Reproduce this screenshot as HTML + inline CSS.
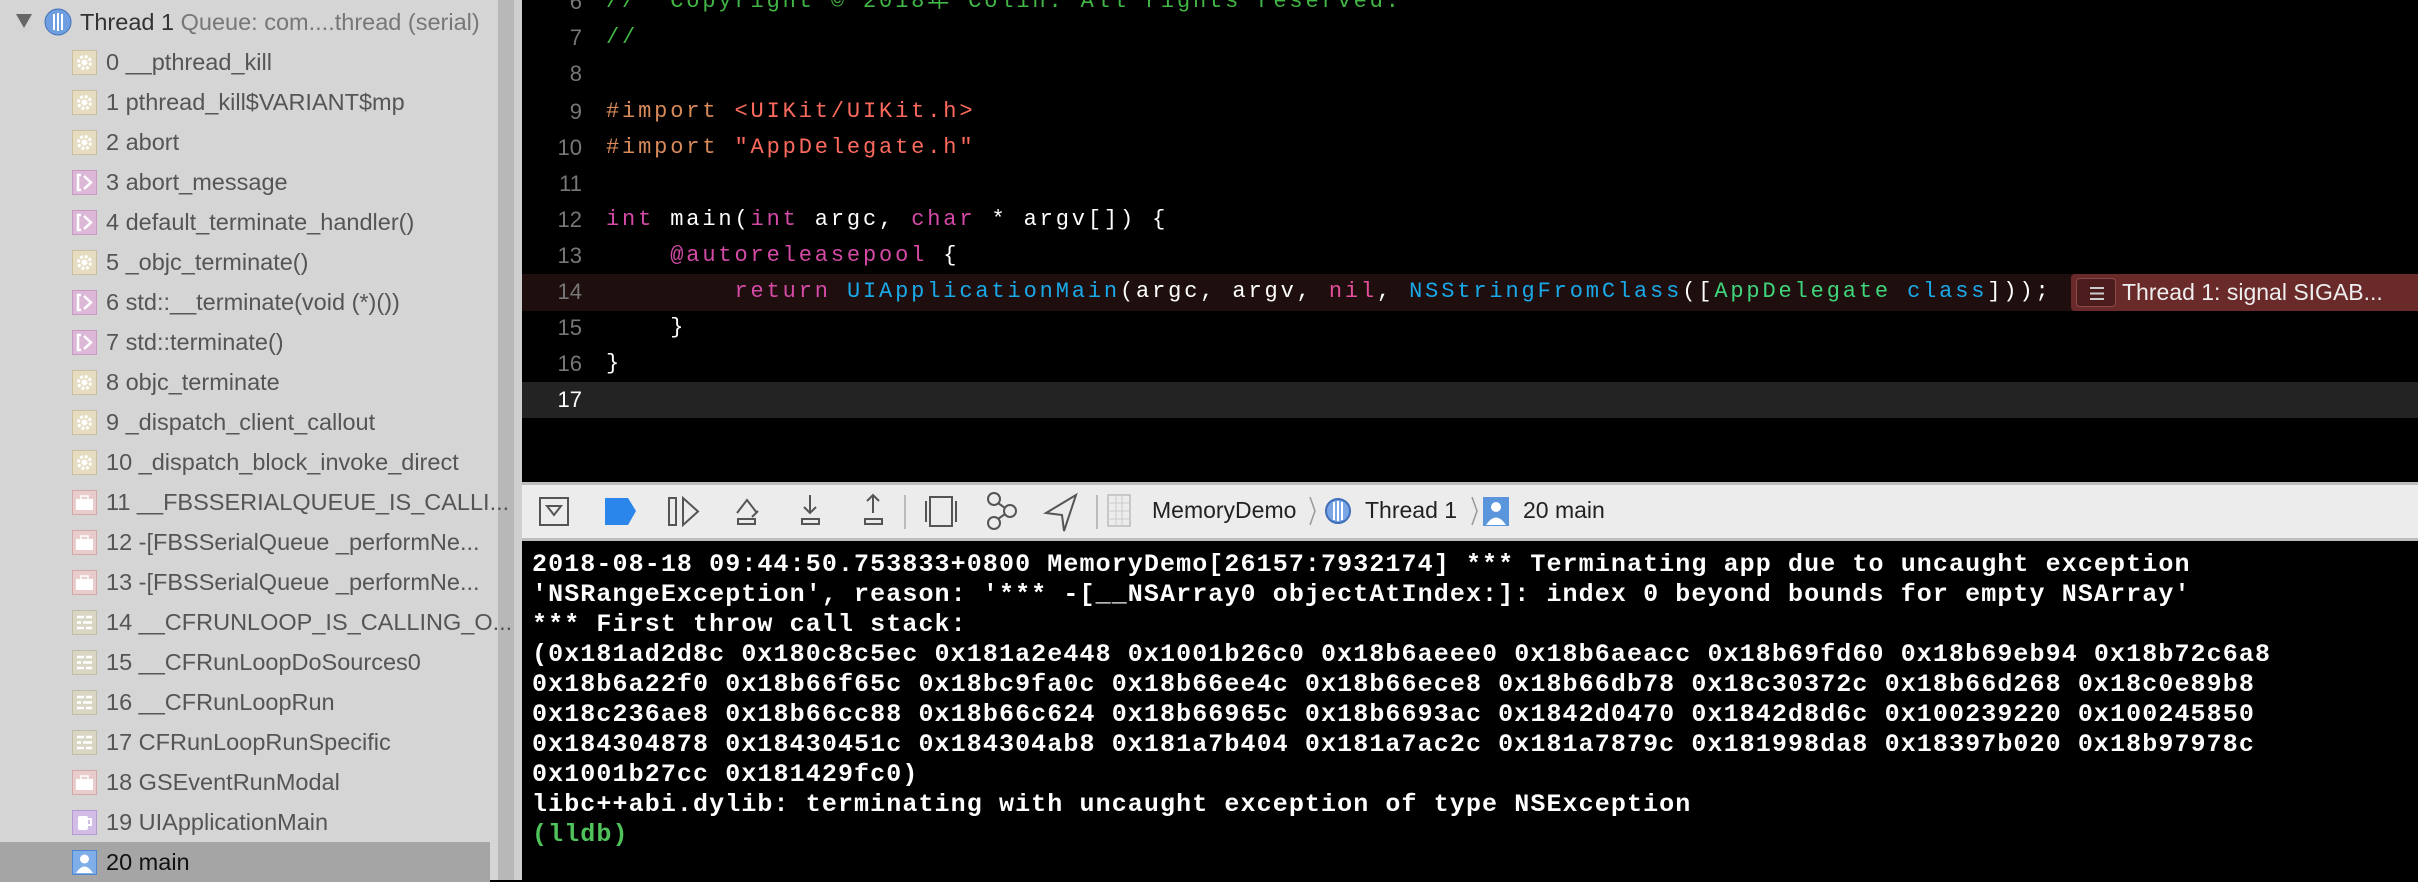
<!DOCTYPE html>
<html><head><meta charset="utf-8"><style>
*{margin:0;padding:0;box-sizing:border-box}
body{width:2418px;height:880px;overflow:hidden;background:#000;position:relative;font-family:"Liberation Sans",sans-serif}
#side{position:absolute;left:0;top:0;width:498px;height:880px;background:#d6d5d5}
#strip1{position:absolute;left:498px;top:0;width:16px;height:880px;background:#b9b8b8}
#strip2{position:absolute;left:514px;top:0;width:8px;height:880px;background:#cfcfcf}
.row{position:absolute;left:0;width:490px;height:40px;font-size:23.5px;color:#555;line-height:40px;white-space:nowrap}
.row .ic{position:absolute;left:72px;top:8px;width:25px;height:25px}
.row .t{position:absolute;left:106px;top:0}
.sel{background:#a6a5a5;color:#111}
.ln{position:absolute;left:522px;width:60px;text-align:right;color:#777;font-family:"Liberation Sans",sans-serif;font-size:22px;height:36px;line-height:36px}
.code{position:absolute;left:606px;font-family:"Liberation Mono",monospace;font-size:22px;letter-spacing:2.86px;color:#fff;height:36px;line-height:36px;white-space:pre}
.g{color:#41b645}.o{color:#d88a5a}.r{color:#fc6a5d}.p{color:#d44aa6}.b{color:#1aa9e8}.gr{color:#3fd67b}.pk{color:#e34f9a}
#tb{position:absolute;left:522px;top:482px;width:1896px;height:59px;background:#ececec;border-top:3px solid #bdbdbd;border-bottom:3px solid #bdbdbd}
.con{position:absolute;left:532px;font-family:"Liberation Mono",monospace;font-weight:bold;font-size:25px;letter-spacing:1.1px;color:#fff;white-space:pre;line-height:30px}
</style></head><body>
<div id="side">
<div class="row" style="top:2px">
<svg style="position:absolute;left:16px;top:12px" width="16" height="14"><path d="M0 0H16L8 14Z" fill="#666"/></svg>
<svg style="position:absolute;left:44px;top:6px" width="28" height="28"><circle cx="14" cy="14" r="13" fill="#6f9fe0" stroke="#3f6fb8"/><path d="M10 6V22M14 5V23M18 6V22" stroke="#fff" stroke-width="2"/></svg>
<span style="position:absolute;left:80px;color:#333">Thread 1 <span style="color:#777">Queue: com....thread (serial)</span></span></div>
</div>
<div id="strip1"></div><div id="strip2"></div>

<div id="rows"></div>

<div style="position:absolute;left:522px;top:274px;width:1896px;height:37px;background:#1e0e0e"></div>
<div style="position:absolute;left:522px;top:382px;width:1896px;height:36px;background:#232323"></div>
<div style="position:absolute;left:2071px;top:274px;width:347px;height:37px;background:#6a2a2a;border-radius:4px 0 0 4px"></div>
<div style="position:absolute;left:2076px;top:278px;width:40px;height:29px;background:#4c1c1c;border:1px solid #8a4a4a;border-radius:4px"><svg width="40" height="29"><path d="M13 9H27M13 14.5H27M13 20H27" stroke="#ccc" stroke-width="2"/></svg></div>
<div style="position:absolute;left:2122px;top:274px;height:37px;line-height:37px;color:#eee;font-size:23px">Thread 1: signal SIGAB...</div>

<div class="ln" style="top:-16px">6</div><div class="code g" style="top:-16px">//  Copyright © 2018年 Colin. All rights reserved.</div>
<div class="ln" style="top:20px">7</div><div class="code g" style="top:20px">//</div>
<div class="ln" style="top:56px">8</div>
<div class="ln" style="top:94px">9</div><div class="code" style="top:94px"><span class="o">#import</span> <span class="r">&lt;UIKit/UIKit.h&gt;</span></div>
<div class="ln" style="top:130px">10</div><div class="code" style="top:130px"><span class="o">#import</span> <span class="r">"AppDelegate.h"</span></div>
<div class="ln" style="top:166px">11</div>
<div class="ln" style="top:202px">12</div><div class="code" style="top:202px"><span class="p">int</span> main(<span class="p">int</span> argc, <span class="p">char</span> * argv[]) {</div>
<div class="ln" style="top:238px">13</div><div class="code" style="top:238px">    <span class="p">@autoreleasepool</span> {</div>
<div class="ln" style="top:274px">14</div><div class="code" style="top:274px">        <span class="p">return</span> <span class="b">UIApplicationMain</span>(argc, argv, <span class="pk">nil</span>, <span class="b">NSStringFromClass</span>([<span class="gr">AppDelegate</span> <span class="b">class</span>]));</div>
<div class="ln" style="top:310px">15</div><div class="code" style="top:310px">    }</div>
<div class="ln" style="top:346px">16</div><div class="code" style="top:346px">}</div>
<div class="ln" style="top:382px;color:#fff">17</div>

<div id="tb">
<svg width="1896" height="53" style="position:absolute;left:0;top:0" fill="none" stroke="#555" stroke-width="2">
<rect x="18" y="13" width="28" height="27"/><path d="M25 21H39L32 30Z"/>
<path d="M83 13H106L114 26L106 40H83Z" fill="#2a86ea" stroke="none"/>
<rect x="147" y="13" width="7" height="27"/><path d="M161 13L176 26.5L161 40Z"/>
<path d="M215 28L225 15L235 28M230 32L236 26" /><rect x="216" y="34" width="17" height="5"/>
<path d="M288 10V28M282 22L288 28L294 22"/><rect x="280" y="34" width="17" height="5"/>
<path d="M351 28V10M345 16L351 10L357 16"/><rect x="343" y="34" width="17" height="5"/>
<path d="M383 10V44" stroke="#bbb"/>
<rect x="408" y="12" width="22" height="29"/><path d="M404 16V37M434 16V37"/>
<circle cx="472" cy="14" r="6"/><circle cx="472" cy="38" r="6"/><circle cx="488" cy="26" r="6"/><path d="M476 18L483 23M476 34L483 29"/>
<path d="M554 10L524 28L540 30L542 46Z"/>
<path d="M575 10V44" stroke="#bbb"/>
<rect x="586" y="10" width="22" height="31" stroke="#bbb" stroke-width="1.5"/><path d="M586 18H608M586 26H608M586 34H608M594 10V41M600 10V41" stroke="#ccc" stroke-width="1"/>
<path d="M788 12L793 26L788 40M950 12L955 26L950 40" stroke="#999" stroke-width="1.5"/>
<circle cx="816" cy="26" r="12" fill="#7aa6e6" stroke="#3f6fb8"/><path d="M812 17V35M816 16V36M820 17V35" stroke="#fff"/>
<rect x="961" y="12" width="26" height="29" fill="#5b95dc" stroke="none"/><circle cx="974" cy="22" r="5" fill="#fff" stroke="none"/><path d="M964 40Q974 25 984 40Z" fill="#fff" stroke="none"/>
</svg>
<div style="position:absolute;left:630px;top:0;line-height:50px;font-size:23px;color:#222">MemoryDemo</div>
<div style="position:absolute;left:843px;top:0;line-height:50px;font-size:23px;color:#222">Thread 1</div>
<div style="position:absolute;left:1001px;top:0;line-height:50px;font-size:23px;color:#222">20 main</div>
</div>

<div class="con" style="top:550px">2018-08-18 09:44:50.753833+0800 MemoryDemo[26157:7932174] *** Terminating app due to uncaught exception
'NSRangeException', reason: '*** -[__NSArray0 objectAtIndex:]: index 0 beyond bounds for empty NSArray'
*** First throw call stack:
(0x181ad2d8c 0x180c8c5ec 0x181a2e448 0x1001b26c0 0x18b6aeee0 0x18b6aeacc 0x18b69fd60 0x18b69eb94 0x18b72c6a8
0x18b6a22f0 0x18b66f65c 0x18bc9fa0c 0x18b66ee4c 0x18b66ece8 0x18b66db78 0x18c30372c 0x18b66d268 0x18c0e89b8
0x18c236ae8 0x18b66cc88 0x18b66c624 0x18b66965c 0x18b6693ac 0x1842d0470 0x1842d8d6c 0x100239220 0x100245850
0x184304878 0x18430451c 0x184304ab8 0x181a7b404 0x181a7ac2c 0x181a7879c 0x181998da8 0x18397b020 0x18b97978c
0x1001b27cc 0x181429fc0)
libc++abi.dylib: terminating with uncaught exception of type NSException
<span style="color:#4fc25a">(lldb)</span></div>

<script>
var items=[["0 __pthread_kill","g"],["1 pthread_kill$VARIANT$mp","g"],["2 abort","g"],["3 abort_message","p"],["4 default_terminate_handler()","p"],["5 _objc_terminate()","g"],["6 std::__terminate(void (*)())","p"],["7 std::terminate()","p"],["8 objc_terminate","g"],["9 _dispatch_client_callout","g"],["10 _dispatch_block_invoke_direct","g"],["11 __FBSSERIALQUEUE_IS_CALLI...","r"],["12 -[FBSSerialQueue _performNe...","r"],["13 -[FBSSerialQueue _performNe...","r"],["14 __CFRUNLOOP_IS_CALLING_O...","l"],["15 __CFRunLoopDoSources0","l"],["16 __CFRunLoopRun","l"],["17 CFRunLoopRunSpecific","l"],["18 GSEventRunModal","r"],["19 UIApplicationMain","m"],["20 main","u"]];
var icons={
g:'<rect x=".5" y=".5" width="24" height="24" fill="#e6dcc2" stroke="#cbbf9e"/><circle cx="12.5" cy="12.5" r="6" fill="none" stroke="#fff" stroke-width="3" stroke-dasharray="3 1.7"/><circle cx="12.5" cy="12.5" r="3" fill="#fff"/>',
p:'<rect x=".5" y=".5" width="24" height="24" fill="#dcb7d7" stroke="#c79bc1"/><path d="M9 5H6V20H9M12 6L19 12.5L12 19" fill="none" stroke="#fff" stroke-width="2.5"/>',
r:'<rect x=".5" y=".5" width="24" height="24" fill="#e9cccc" stroke="#d3a8a8"/><rect x="4" y="9" width="17" height="11" fill="#fff"/><rect x="9" y="6" width="7" height="4" fill="none" stroke="#fff" stroke-width="1.5"/>',
l:'<rect x=".5" y=".5" width="24" height="24" fill="#d9d6c4" stroke="#c2bea6"/><path d="M5 7H12M14 7H20M5 12.5H9M11 12.5H20M5 18H12M14 18H20" stroke="#fff" stroke-width="2.5"/>',
m:'<rect x=".5" y=".5" width="24" height="24" fill="#d2bde6" stroke="#b79ad3"/><rect x="6" y="6" width="10" height="14" rx="2" fill="#fff"/><path d="M16 9H19V15H16" fill="none" stroke="#fff" stroke-width="2"/>',
u:'<rect x=".5" y=".5" width="24" height="24" fill="#7faee8" stroke="#4f86d0"/><circle cx="12.5" cy="9" r="4.5" fill="#fff"/><path d="M4 23Q12.5 10 21 23Z" fill="#fff"/>'};
var h='';
items.forEach(function(it,i){var top=42+40*i;
h+='<div class="row'+(i==20?' sel':'')+'" style="top:'+top+'px"><svg class="ic" viewBox="0 0 25 25">'+icons[it[1]]+'</svg><span class="t">'+it[0].replace(/</g,'&lt;')+'</span></div>';});
document.getElementById('rows').innerHTML=h;
</script>
</body></html>
